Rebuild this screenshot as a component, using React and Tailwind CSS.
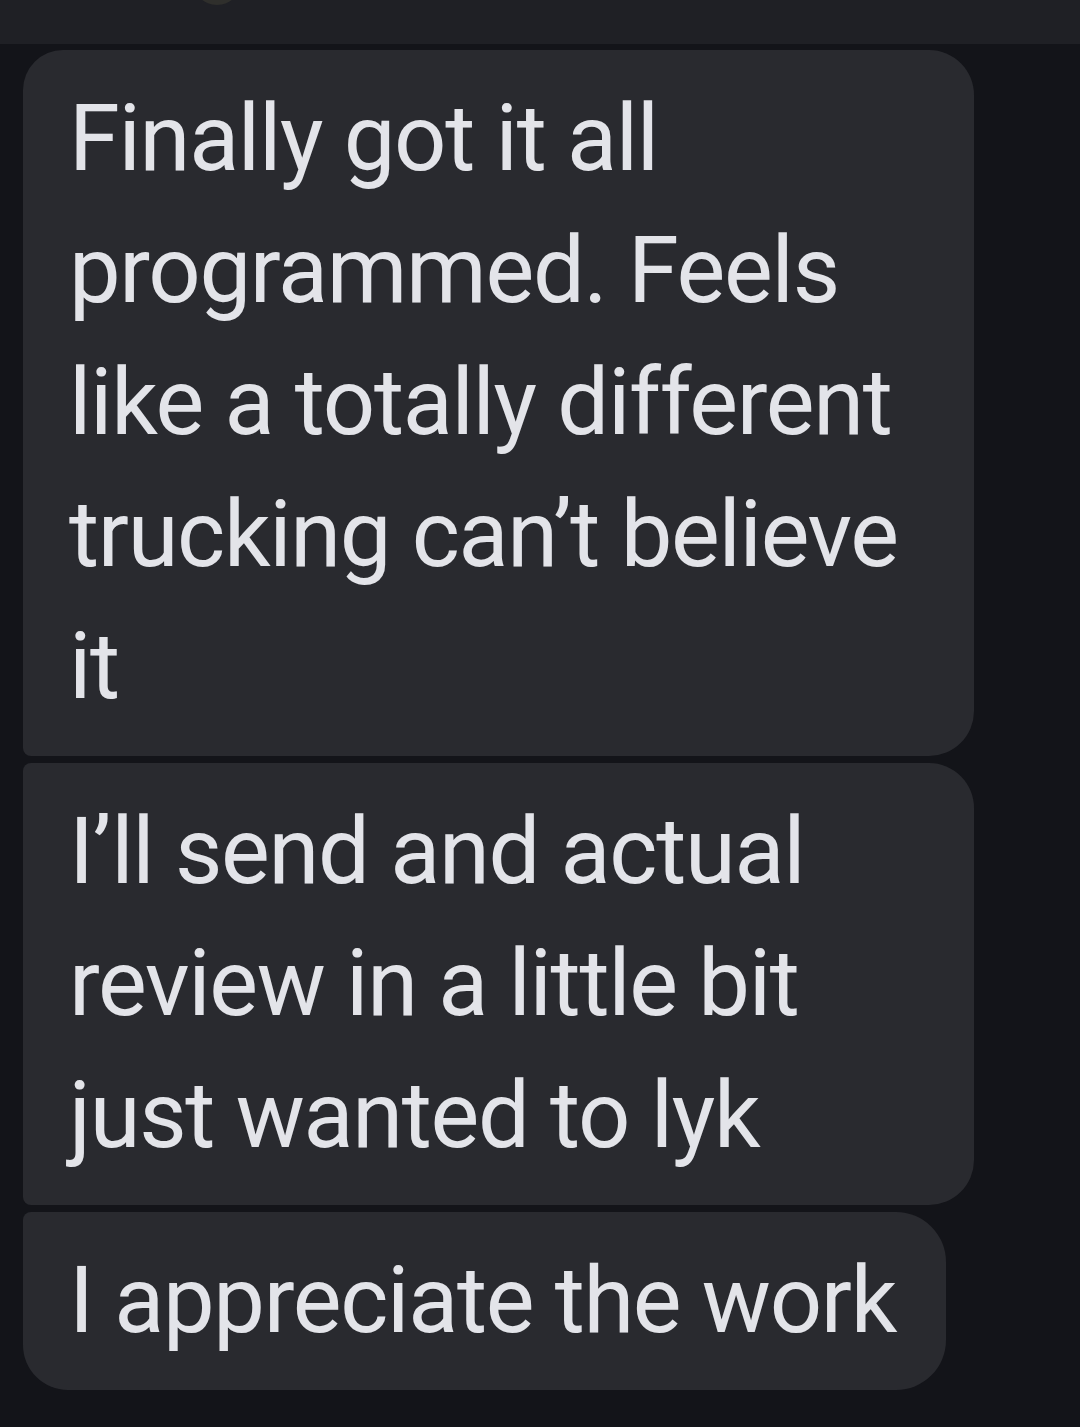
import React from 'react'

const font = { fontFamily: 'Roboto, "Noto Sans", sans-serif' }

function Bubble({ lines, className }) {
  return (
    <div
      className={`bg-[#292a2f] pl-[46px] py-[23px] text-[92px] leading-[132px] tracking-[-1.3px] text-[#e3e4e9] ${className}`}
    >
      {lines.map((line) => (
        <p key={line} className="whitespace-nowrap">
          {line}
        </p>
      ))}
    </div>
  )
}

function App() {
  return (
    <div className="h-[1427px] w-[1080px] overflow-hidden bg-[#131419]" style={font}>
      <div className="h-[44px] overflow-hidden bg-[#1f2025]">
        <div className="-mt-[43px] ml-[193px] h-12 w-12 rounded-full bg-[#2f2f2c]" />
      </div>
      <div className="flex flex-col items-start gap-[7px] pl-[23px] pt-[6px]">
        <Bubble
          className="w-[951px] pr-[46px] rounded-tl-[40px] rounded-tr-[45px] rounded-br-[45px] rounded-bl-[8px]"
          lines={[
            'Finally got it all',
            'programmed. Feels',
            'like a totally different',
            'trucking can’t believe',
            'it',
          ]}
        />
        <Bubble
          className="w-[951px] pr-[46px] rounded-tl-[8px] rounded-tr-[45px] rounded-br-[45px] rounded-bl-[8px]"
          lines={[
            'I’ll send and actual',
            'review in a little bit',
            'just wanted to lyk',
          ]}
        />
        <Bubble
          className="pr-[50px] rounded-tl-[8px] rounded-tr-[50px] rounded-br-[50px] rounded-bl-[45px]"
          lines={['I appreciate the work']}
        />
      </div>
    </div>
  )
}

export default App
